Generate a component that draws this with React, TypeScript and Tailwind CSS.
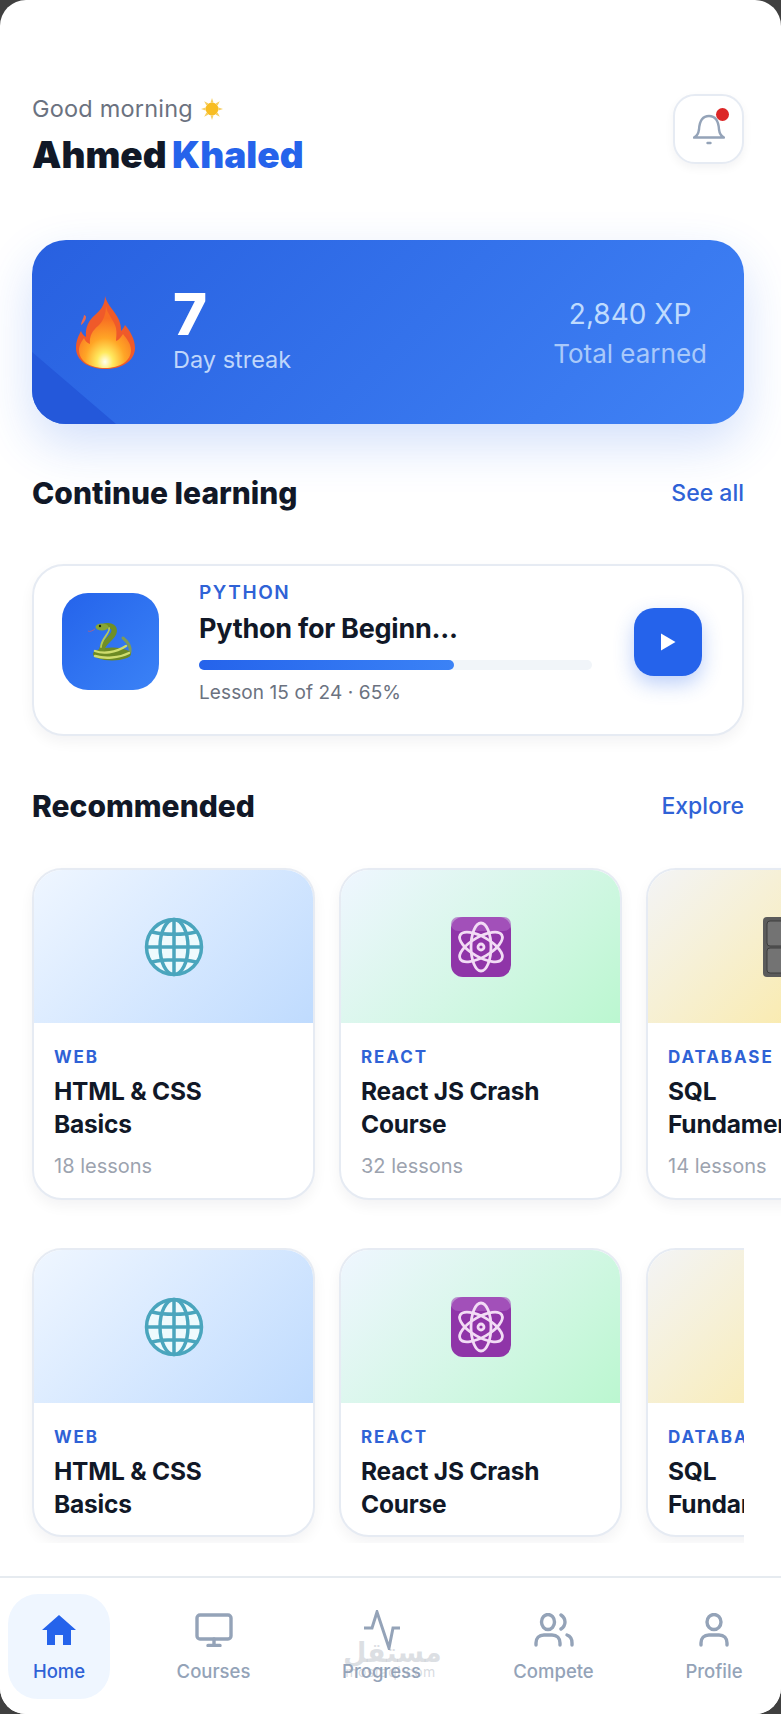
import React from 'react';

// little drawings standing in for the colour emoji of the screenshot
function Sun() {
  return (
    <svg width="22" height="22" viewBox="0 0 24 24" className="ml-[8px]">
      <g fill="#f6cf62">
        <path d="M12 0l1.600 5h-3.200z" />
        <path d="M12 24l1.600-5h-3.200z" />
        <path d="M0 12l5-1.600v3.200z" />
        <path d="M24 12l-5-1.600v3.200z" />
        <path d="M3.500 3.500l4.700 2.400-2.300 2.300z" />
        <path d="M20.500 3.500l-4.700 2.400 2.300 2.300z" />
        <path d="M3.500 20.500l4.700-2.400-2.300-2.300z" />
        <path d="M20.500 20.500l-4.700-2.400 2.300-2.300z" />
      </g>
      <circle cx="12" cy="12" r="7" fill="#f8bd22" />
    </svg>
  );
}

function Flame() {
  return (
    <svg width="59" height="73" viewBox="0 0 59 73">
      <defs>
        <radialGradient id="flameCore" cx="50%" cy="90%" r="70%">
          <stop offset="0%" stopColor="#fffff0" />
          <stop offset="22%" stopColor="#ffe95e" />
          <stop offset="55%" stopColor="#ffa526" />
          <stop offset="100%" stopColor="#f86f22" />
        </radialGradient>
      </defs>
      <path d="M29 0c2 9 10 15 14 24 2 5 2 8 2 11 2-2 3-4 4-6 5 6 10 14 10 23 0 12-12 21-29 21S0 65 0 52c0-8 3-13 5-17 1 3 3 5 5 6-1-10 3-17 9-22 6-5 10-11 10-19z" fill="#ef5a2a" />
      <path d="M8 19c0 3-3 6-3 10 2-1 5-5 5-8 0-1-1-2-2-2z" fill="#e8694f" />
      <path d="M30 10c1 8 8 14 10 22 1 5 0 10 0 13 3-1 5-4 7-7 4 5 8 10 8 16 0 11-11 18-26 18S3 65 3 54c0-5 3-9 5-12 1 3 3 5 6 6-1-8 3-14 8-18 5-4 8-12 8-20z" fill="url(#flameCore)" />
    </svg>
  );
}

function Snake() {
  return (
    <svg width="46" height="38" viewBox="0 0 46 38" fill="none">
      <path d="M0 8c2 1 4 0 7-2" stroke="#b9607a" strokeWidth="0.8" />
      <path d="M35 15c5 4 8 9 7 14" stroke="#7d9a5a" strokeWidth="3" strokeLinecap="round" />
      <ellipse cx="24" cy="31" rx="19" ry="6.500" fill="#6d8a24" />
      <path d="M17 3c6-1 10 1 9 6-1 6-11 10-12 17" stroke="#6f8f26" strokeWidth="5.500" strokeLinecap="round" />
      <path d="M21 5c2 4-8 11-8 19" stroke="#b6c958" strokeWidth="1.800" strokeLinecap="round" />
      <ellipse cx="14" cy="4" rx="6.500" ry="3.500" fill="#86a534" />
      <path d="M7 28c8 3 20 2 31-5M7 33c10 3 24 2 34-3" stroke="#cfdc6e" strokeWidth="2.400" strokeLinecap="round" />
      <circle cx="12" cy="3" r="1.200" fill="#1f2a0a" />
    </svg>
  );
}

function Globe() {
  return (
    <svg width="60" height="60" viewBox="0 0 60 60" fill="none">
      <circle cx="30" cy="30" r="28" fill="#eefafd" />
      <g stroke="#4aa5bd" strokeWidth="3.500">
        <circle cx="30" cy="30" r="27.500" />
        <ellipse cx="30" cy="30" rx="14" ry="27.500" />
        <path d="M30 2v56M3 30h54M8 15c12 3 32 3 44 0M8 45c12-3 32-3 44 0" />
      </g>
    </svg>
  );
}

function Atom() {
  return (
    <svg width="60" height="60" viewBox="0 0 60 60" fill="none">
      <rect width="60" height="60" rx="12" fill="#8f35a8" />
      <rect width="60" height="14" rx="7" fill="#a95cc0" opacity="0.7" />
      <g stroke="#f2dcf5" strokeWidth="2.800">
        <ellipse cx="30" cy="30" rx="10" ry="24" />
        <ellipse cx="30" cy="30" rx="10" ry="24" transform="rotate(60 30 30)" />
        <ellipse cx="30" cy="30" rx="10" ry="24" transform="rotate(120 30 30)" />
        <circle cx="30" cy="30" r="3" />
      </g>
    </svg>
  );
}

function Cabinet() {
  return (
    <svg width="50" height="60" viewBox="0 0 50 60">
      <rect width="50" height="60" rx="4" fill="#5b5b5b" />
      <rect x="4" y="4" width="42" height="25" rx="3" fill="#737373" stroke="#3e3e3e" />
      <rect x="4" y="31" width="42" height="25" rx="3" fill="#737373" stroke="#3e3e3e" />
      <rect x="18" y="9" width="14" height="8" fill="#e7e7e7" />
      <rect x="18" y="36" width="14" height="8" fill="#e7e7e7" />
      <rect x="20" y="21" width="10" height="3" fill="#333" />
      <rect x="20" y="48" width="10" height="3" fill="#333" />
    </svg>
  );
}

function BellIcon() {
  return (
    <svg width="32" height="32" viewBox="0 0 32 32" fill="none" stroke="#94a3b8" strokeWidth="2.400" strokeLinecap="round" strokeLinejoin="round">
      <path d="M1 24.500h30c-3-1.500-4.500-4-5-8C25.500 8 22 3 16 3S6.500 8 6 16.500c-.5 4-2 6.500-5 8z" />
      <path d="M14.500 30h3" />
    </svg>
  );
}

function PlayIcon() {
  return (
    <svg width="16" height="18" viewBox="0 0 16 18" fill="white">
      <path d="M1 0.500L15.500 9 1 17.500z" />
    </svg>
  );
}

function HomeIcon() {
  return (
    <svg width="34" height="30" viewBox="0 0 34 30" fill="#2563eb">
      <path d="M17 0L34 15h-5v15h-8v-10h-8v10H5V15H0z" />
    </svg>
  );
}

function CoursesIcon() {
  return (
    <svg width="38" height="34" viewBox="0 0 38 34" fill="none" stroke="#94a3b8" strokeWidth="3.400" strokeLinecap="round" strokeLinejoin="round">
      <rect x="2" y="2" width="34" height="24" rx="3" />
      <path d="M19 26v6M13 32.500h12" />
    </svg>
  );
}

function ProgressIcon() {
  return (
    <svg width="36" height="40" viewBox="0 0 36 40" fill="none" stroke="#94a3b8" strokeWidth="3" strokeLinejoin="miter">
      <path d="M0 18h8l5-16 12 36 4-20h7" />
    </svg>
  );
}

function CompeteIcon() {
  return (
    <svg width="40" height="34" viewBox="0 0 40 34" fill="none" stroke="#94a3b8" strokeWidth="3.400" strokeLinecap="round">
      <ellipse cx="14" cy="9" rx="6.500" ry="7.500" />
      <path d="M2 32v-2c0-5 3-8 8-8h8c5 0 8 3 8 8v2" />
      <path d="M27 2c3 2 4 4.500 4 7s-1 5-4 7" />
      <path d="M33 22c3 1 5 4 5 8v2" />
    </svg>
  );
}

function ProfileIcon() {
  return (
    <svg width="30" height="34" viewBox="0 0 30 34" fill="none" stroke="#94a3b8" strokeWidth="3.400" strokeLinecap="round">
      <ellipse cx="15" cy="9" rx="7" ry="7.500" />
      <path d="M2 32v-2c0-5 3-8 8-8h10c5 0 8 3 8 8v2" />
    </svg>
  );
}

const courses = [
  { tag: 'WEB', title: 'HTML & CSS', title2: 'Basics', lessons: '18 lessons', art: <Globe />, bg: 'from-[#eff6ff] to-[#bfdbfe]' },
  { tag: 'REACT', title: 'React JS Crash', title2: 'Course', lessons: '32 lessons', art: <Atom />, bg: 'from-[#eff6ff] to-[#bbf7d0]' },
  { tag: 'DATABASE', title: 'SQL', title2: 'Fundamentals', lessons: '14 lessons', art: <Cabinet />, bg: 'from-[#f3f4f6] to-[#fde68a]' },
];

const navItems = [
  { label: 'Home', icon: <HomeIcon />, width: 'w-[102px]', active: true },
  { label: 'Courses', icon: <CoursesIcon />, width: 'w-[125px]' },
  { label: 'Progress', icon: <ProgressIcon />, width: 'w-[129px]' },
  { label: 'Compete', icon: <CompeteIcon />, width: 'w-[133px]' },
  { label: 'Profile', icon: <ProfileIcon />, width: 'w-[106px]' },
];

function CourseCard({ course, showLessons }: { course: (typeof courses)[number]; showLessons: boolean }) {
  return (
    <div className="w-[283px] shrink-0 overflow-hidden rounded-[30px] border-2 border-[#e6ebf3] bg-white shadow-[0_6px_14px_rgba(15,23,42,0.05)]">
      <div className={`flex h-[153px] items-center justify-center bg-linear-135 ${course.bg}`}>{course.art}</div>
      <div className="px-[20px] pt-[21px]">
        <div className="text-[17px] leading-[26px] font-bold tracking-[1.9px] whitespace-nowrap text-[#2f62d6]">{course.tag}</div>
        <div className="mt-[5px] text-[24.5px] leading-[33px] font-bold tracking-[-0.2px] whitespace-nowrap text-[#111827]">
          {course.title}
          <br />
          {course.title2}
        </div>
        {showLessons ? <div className="mt-[10px] pb-[17px] text-[20px] leading-[30px] text-[#9ca3af]">{course.lessons}</div> : <div className="h-[14px]" />}
      </div>
    </div>
  );
}

function SectionHeading({ title, link }: { title: string; link: string }) {
  return (
    <div className="flex h-[40px] items-center justify-between">
      <h2 className="text-[30px] font-extrabold text-[#111827]">{title}</h2>
      <span className="text-[23px] font-medium text-[#2f62d6]">{link}</span>
    </div>
  );
}

export default function App() {
  return (
    <div className="h-[1714px] w-[781px] overflow-hidden bg-[#404040] font-['Inter',sans-serif]">
      <div className="relative h-full overflow-hidden rounded-[26px] bg-white">
        <div className="pt-[94px] pr-[37px] pl-[32px]">
          <header className="flex h-[70px] items-start justify-between">
            <div>
              <div className="-mt-[1px] flex h-[32px] items-center text-[23.500px] tracking-[0.2px] text-[#6b7280]">
                Good morning
                <Sun />
              </div>
              <div className="mt-[8px] text-[37px] leading-[44px] font-black [word-spacing:-2px] text-[#111827]">
                Ahmed <span className="text-[#2563eb]">Khaled</span>
              </div>
            </div>
            <button className="relative flex h-[70px] w-[71px] items-center justify-center rounded-[22px] border-2 border-[#e6ebf3] bg-white shadow-[0_4px_10px_rgba(15,23,42,0.05)]">
              <BellIcon />
              <span className="absolute top-[12px] left-[41px] h-[13px] w-[13px] rounded-full bg-[#dc2626]" />
            </button>
          </header>

          <section className="relative mt-[76px] flex h-[184px] items-center justify-between rounded-[34px] bg-linear-135 from-[#2860e0] to-[#4082f5] pr-[37px] pl-[44px] shadow-[0_20px_50px_rgba(37,99,235,0.2)]">
            <div className="absolute bottom-0 left-0 h-[72px] w-[84px] overflow-hidden rounded-bl-[34px]">
              <div className="h-full w-full bg-[#2458da] [clip-path:polygon(0_0,100%_100%,0_100%)]" />
            </div>
            <div className="relative flex items-center">
              <Flame />
              <div className="-mt-[5px] ml-[38px]">
                <div className="text-[58px] leading-[60px] font-extrabold text-white">7</div>
                <div className="mt-[1px] text-[23.500px] leading-[30px] text-[#bfd6fb]">Day streak</div>
              </div>
            </div>
            <div className="relative text-center">
              <div className="text-[28px] leading-[36px] text-[#bfdbfe]">2,840 XP</div>
              <div className="mt-[7px] text-[26px] leading-[30px] text-[#a9c9fa]">Total earned</div>
            </div>
          </section>

          <div className="mt-[49px]">
            <SectionHeading title="Continue learning" link="See all" />
          </div>

          <section className="mt-[51px] flex h-[172px] items-center rounded-[32px] border-2 border-[#e6ebf3] bg-white pr-[40px] pb-[14px] pl-[28px] shadow-[0_6px_14px_rgba(15,23,42,0.05)]">
            <div className="mb-[3px] flex h-[97px] w-[97px] shrink-0 items-center justify-center rounded-[26px] bg-linear-135 from-[#2563eb] to-[#3b82f6]">
              <Snake />
            </div>
            <div className="ml-[40px] w-[393px]">
              <div className="text-[19px] leading-[26px] font-semibold tracking-[1.6px] text-[#2f62d6]">PYTHON</div>
              <div className="mt-[6px] text-[27px] leading-[34px] font-bold tracking-[-0.25px] text-[#111827]">Python for Beginn...</div>
              <div className="mt-[14px] h-[10px] rounded-full bg-[#f1f5f9]">
                <div className="h-full w-[65%] rounded-full bg-linear-to-r from-[#2563eb] to-[#3b82f6]" />
              </div>
              <div className="mt-[9px] text-[19px] leading-[28px] tracking-[0.1px] text-[#6b7280]">Lesson 15 of 24 · 65%</div>
            </div>
            <button className="mb-[2px] ml-auto flex h-[68px] w-[68px] items-center justify-center rounded-[20px] bg-[#2563eb] shadow-[0_8px_20px_rgba(37,99,235,0.3)]">
              <PlayIcon />
            </button>
          </section>

          <div className="mt-[50px]">
            <SectionHeading title="Recommended" link="Explore" />
          </div>

          <div className="mt-[42px] -mr-[37px] flex gap-[24px]">
            {courses.map(course => (
              <CourseCard key={course.tag} course={course} showLessons />
            ))}
          </div>

          <div className="mt-[48px] -ml-[32px] h-[295px] w-[744px] overflow-hidden pl-[32px]">
            <div className="flex gap-[24px]">
              {courses.map(course => (
                <CourseCard key={course.tag} course={course} showLessons={false} />
              ))}
            </div>
          </div>
        </div>

        <nav className="absolute right-0 bottom-0 left-0 h-[138px] border-t-2 border-[#e6ebf0] bg-white">
          <div className="absolute top-[53px] left-[343px] w-[95px] text-center">
            <div className="font-['DejaVu_Sans',sans-serif] text-[27px] leading-[44px] font-bold text-[#9ca3af]/35">مستقل</div>
            <div className="-mt-[11px] text-[14px] leading-[16px] tracking-[0.5px] text-[#9ca3af]/40">mostaql.com</div>
          </div>
          <div className="relative flex gap-[41px] pt-[16px] pl-[8px]">
            {navItems.map(item => (
              <div
                key={item.label}
                className={`flex h-[105px] shrink-0 flex-col items-center rounded-[30px] pt-[16px] ${item.width} ${item.active ? 'bg-[#eff6ff]' : ''}`}
              >
                <div className="flex h-[40px] items-center">{item.icon}</div>
                <div className={`mt-[6px] text-[18.500px] leading-[30px] font-medium ${item.active ? 'text-[#2f62d6]' : 'text-[#94a3b8]'}`}>
                  {item.label}
                </div>
              </div>
            ))}
          </div>
        </nav>
      </div>
    </div>
  );
}
